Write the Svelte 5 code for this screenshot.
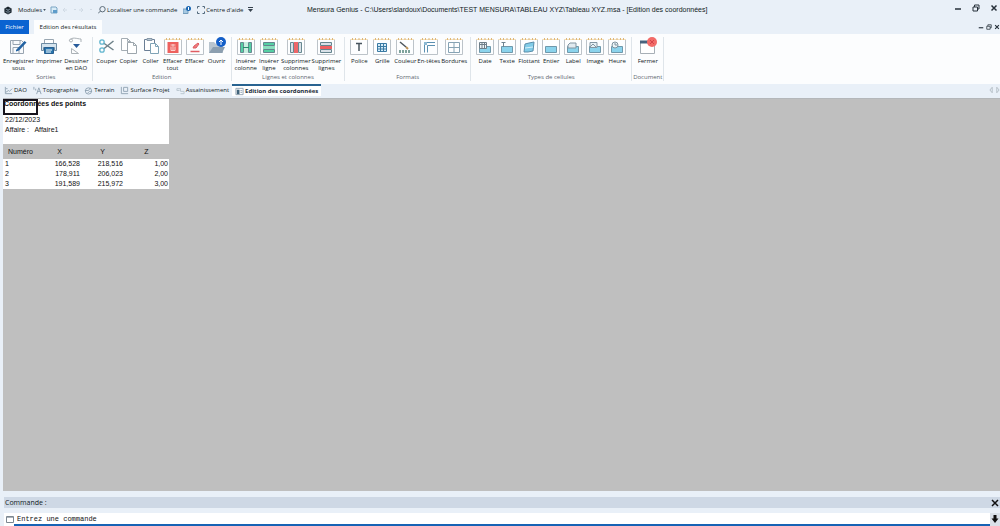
<script>
  const groups = [
    { title: 'Sorties', items: [['save', 'Enregistrer', 'sous'], ['print', 'Imprimer'], ['draw', 'Dessiner', 'en DAO']] },
    { title: 'Edition', items: [['cut', 'Couper'], ['copy', 'Copier'], ['paste', 'Coller'], ['trash', 'Effacer', 'tout'], ['erase', 'Effacer'], ['open', 'Ouvrir']] },
    { title: 'Lignes et colonnes', items: [['incol', 'Insérer', 'colonne'], ['inrow', 'Insérer', 'ligne'], ['delcol', 'Supprimer', 'colonnes'], ['delrow', 'Supprimer', 'lignes']] },
    { title: 'Formats', items: [['font', 'Police'], ['grid', 'Grille'], ['color', 'Couleur'], ['head', 'En-têtes'], ['border', 'Bordures']] },
    { title: 'Types de cellules', items: [['date', 'Date'], ['text', 'Texte'], ['float', 'Flottant'], ['int', 'Entier'], ['label', 'Label'], ['image', 'Image'], ['hour', 'Heure']] },
    { title: 'Document', items: [['close', 'Fermer']] },
  ];
  const framed = ['trash', 'erase', 'incol', 'inrow', 'delcol', 'delrow', 'font', 'grid', 'color', 'head', 'border', 'date', 'text', 'float', 'int', 'label', 'image', 'hour'];
  const cells = ['date', 'text', 'int', 'label', 'image', 'hour'];
  const tabs = [['dao', 'DAO'], ['topo', 'Topographie'], ['terrain', 'Terrain'], ['surface', 'Surface Projet'], ['pipe', 'Assainissement'], ['edit', 'Edition des coordonnées']];
  const rows = [['1', '166,528', '218,516', '1,00'], ['2', '178,911', '206,023', '2,00'], ['3', '191,589', '215,972', '3,00']];
  let command = $state('Entrez une commande');
</script>

{#snippet icon(n)}
  <svg class="icon" viewBox="0 0 18 18" fill="none" aria-hidden="true">
    {#if framed.includes(n)}
      <path d="M.5 2.500h17v15H.5z" fill="#fdfeff" stroke="#bcc3c9" />
      <path d="M0 2.500h18" stroke="#f3dfbc" />
      <path d="M2.500 1v2M5.500 1v2M9 1v2M12.500 1v2M15.500 1v2" stroke="#dfb878" />
    {/if}
    {#if cells.includes(n)}
      <path d="M3.500 9.500h11v6h-11z" fill="#8bd3ec" stroke="#6f98ab" />
    {/if}
    {#if n === 'save'}
      <path d="M1.500 3.500h11l2 2v11h-13z" fill="#f8fafc" stroke="#98a4b0" />
      <path d="M4 3.500h7v4H4zM4 10.500h6v6H4z" stroke="#98a4b0" />
      <path d="m7 13 8.500-9 2 1.500-7.500 8-3 1z" fill="#2262a2" />
    {:else if n === 'print'}
      <path d="M4.500 6V2.500h9V6" fill="#fff" stroke="#99a6b1" />
      <path d="M1.500 6.500h15v7h-2v-3h-11v3h-2z" fill="#d5e4ee" stroke="#6d8ba3" />
      <path d="M4.500 10.500h9v6h-9z" fill="#2876ae" stroke="#285f91" />
      <path d="M6 13h6M6 15h5" stroke="#fff" />
    {:else if n === 'draw'}
      <path d="M2 4c3-5 8-2 12-2v3M4.500 11.500v5h7z" stroke="#aab1b6" />
      <circle cx="4" cy="3.500" r="1.500" fill="#fff" stroke="#aab1b6" />
      <path d="M6 7h7l-3.500 4z" fill="#275b9b" />
    {:else if n === 'cut'}
      <path d="m5.500 6 10 7M5.500 12l10-8" stroke="#6d8088" stroke-width="1.500" />
      <circle cx="4" cy="5" r="2.200" stroke="#62b6cf" stroke-width="1.300" />
      <circle cx="4" cy="13" r="2.200" stroke="#62b6cf" stroke-width="1.300" />
    {:else if n === 'copy'}
      <path d="M1.500 1.500h6l3 3v9h-9zM7.500 1.500v3h3" fill="#fff" stroke="#a4adb4" />
      <path d="M7.500 5.500h6l3 3v8h-9zM13.500 5.500v3h3" fill="#fff" stroke="#9da6ad" />
    {:else if n === 'paste'}
      <path d="M2.500 2.500h10v11h-10z" fill="#fff" stroke="#6a7e95" />
      <path d="M5 1.500h5v2H5z" fill="#b9c8d4" stroke="#8698a8" />
      <path d="M8.500 6.500h5l3 3v7h-8zM13.500 6.500v3h3" fill="#fff" stroke="#7fa3b6" />
    {:else if n === 'trash'}
      <path d="M3.500 5h11v11h-11z" fill="#ed615e" />
      <path d="M6.500 8h5M7 9.500v4h4v-4M9 7v6" stroke="#fbd3d0" />
    {:else if n === 'erase'}
      <path d="m8 9 4-3 1 1-3 4H7z" fill="#ed7f80" stroke="#df5c62" />
      <path d="M4.500 14.500h9" stroke="#df5c62" stroke-width="1.500" />
    {:else if n === 'open'}
      <path d="M1 5h5l2 2h7v9H1z" fill="#b9c5cf" />
      <path d="m1 16 4-6h12l-3 6z" fill="#8c9fb0" />
      <circle cx="13" cy="5" r="5" fill="#145fc8" />
      <path d="M13 8V3m-2 2 2-2 2 2" stroke="#fff" />
    {:else if n === 'incol' || n === 'delcol'}
      <path d="M3.500 5.500h3v10h-3zM11.500 5.500h3v10h-3z" fill={n === 'incol' ? '#55cfa3' : '#d9e1e8'} stroke="#678890" />
      <path d="M7 5h4v11H7z" fill={n === 'incol' ? '#c9f0e1' : '#ee6668'} />
      {#if n === 'incol'}<path d="M6 10.500h6" stroke="#278b6a" />{/if}
    {:else if n === 'inrow' || n === 'delrow'}
      <path d="M3.500 5.500h11v3h-11zM3.500 12.500h11v3h-11z" fill={n === 'inrow' ? '#55cfa3' : '#d9e1e8'} stroke="#65848e" />
      <path d="M3 9h12v3H3z" fill={n === 'inrow' ? '#8adfbd' : '#ee6062'} />
    {:else if n === 'font'}
      <path d="M6 6.500h6M9 6v8" stroke="#47545e" stroke-width="1.500" />
    {:else if n === 'grid'}
      <path d="M4.500 6.500h9v8h-9zM7.500 6.500v8M10.500 6.500v8M4.500 9.500h9M4.500 12h9" fill="#d7edf9" stroke="#3a7ba4" />
    {:else if n === 'color'}
      <path d="m4 5 6 5" stroke="#4d565d" stroke-width="1.500" />
      <path d="M3 14.500h12" stroke="#7fa39c" stroke-width="3" stroke-dasharray="2 1" />
      <path d="m10 10 2 2" stroke="#bc9157" stroke-width="2" />
    {:else if n === 'head'}
      <path d="M4.500 15.500v-10H15M7.500 15.500v-7H15" stroke="#5b90b1" />
      <path d="M4 5h3v3H4z" fill="#8cb9d3" />
    {:else if n === 'border'}
      <path d="M3.500 5.500h11v10h-11zM9 5.500v10M3.500 10.500h11" stroke="#86a3b4" />
    {:else if n === 'date'}
      <path d="M3.500 5.500h7v6h-7zM3.500 7.500h7M6 5.500v6M8.500 5.500v6" fill="#eef3f6" stroke="#6f7e88" />
    {:else if n === 'text'}
      <path d="M3.500 5.500h4M5.500 5v5" stroke="#6e8490" />
    {:else if n === 'float'}
      <path d="m5 7 4-1 5-1-1 9-5 1H4z" fill="#81cce8" stroke="#5a8eaa" />
      <path d="m5 11 8-1" stroke="#d8f2fb" />
    {:else if n === 'label'}
      <path d="m4 8 2-2h6v5H4z" fill="#e1eaf0" stroke="#8195a1" />
    {:else if n === 'image'}
      <path d="M4 5.500h7v5H4zM4 10l3-3 3 3" fill="#e8f1f5" stroke="#8396a2" />
    {:else if n === 'hour'}
      <circle cx="7" cy="8" r="3" fill="#edf4f7" stroke="#7d929e" />
      <path d="M7 6v2h2" stroke="#7d929e" />
    {:else if n === 'close'}
      <path d="M1.500 4.500h14v12h-14z" fill="#fff" stroke="#a7afb6" />
      <path d="M1 5h10" stroke="#47627d" stroke-width="3" />
      <circle cx="13" cy="5" r="5" fill="#f26b68" />
      <path d="m11 3 4 4m0-4-4 4" stroke="#d4434a" />
    {/if}
  </svg>
{/snippet}

{#snippet tabIcon(n)}
  <svg class="small" viewBox="0 0 10 10" fill="none" stroke="#8fa1b1" aria-hidden="true">
    {#if n === 'dao'}<path d="M1.500 1v7.500H9M2 7l3-2 1 1 3-3M2 3h2" />
    {:else if n === 'topo'}<path d="M1 1v3M3 3v2M4 9l2.500-7L9 9M5 6h3" />
    {:else if n === 'terrain'}<circle cx="5" cy="5.500" r="3.500" /><path d="M1 5h4l2-3M4 8l2-2h3" />
    {:else if n === 'surface'}<path d="M1.500 1v7.500H9M4 1.500h4.500V6H4z" />
    {:else if n === 'pipe'}<path stroke="#b9c5ce" d="M1 3h4v3h4v2.500H5M1 3v2h3" />
    {:else}<path fill="#fff" d="M1 1.500h8v7H1z" /><path fill="#42647b" stroke="none" d="M2 3h3v5H2z" /><path d="M6 4h2M6 6h2" />{/if}
  </svg>
{/snippet}

{#snippet winIcons()}
  <button aria-label="Réduire"><svg viewBox="0 0 8 8"><path d="M1 5h6" stroke-width="1.500" /></svg></button>
  <button aria-label="Restaurer"><svg viewBox="0 0 8 8"><path d="M1 3h4.500v4H1zM2.500 3V1H7v4H5.500" /></svg></button>
  <button aria-label="Fermer"><svg viewBox="0 0 8 8"><path d="m1.500 1.500 5 5m0-5-5 5" stroke-width="1.500" /></svg></button>
{/snippet}

<div class="app">
  <header class="title">
    <div class="quick">
      <svg class="logo" viewBox="0 0 10 10" aria-hidden="true"><path d="m5 0 4.500 2.500v5L5 10 .5 7.500v-5z" fill="#18232c" /><path d="m2 3 3 1.500L8 3M5 4.500V9M2 6l2 1M8 6 6 7" stroke="#92a7b7" fill="none" /></svg>
      <button class="modules">Modules <svg class="caret" viewBox="0 0 4 3"><path d="M0 0h4L2 3z" fill="#44525f" /></svg></button>
      <button aria-label="Enregistrer"><svg class="tiny" viewBox="0 0 8 8"><path d="M1 1h5l1 1v5H1z" fill="#d9ecf7" stroke="#7aa5c4" /><path d="M3 4h4v3H3z" fill="#5e9cca" /></svg></button>
      <div class="history">
        <button aria-label="Annuler"><svg viewBox="0 0 16 6"><path d="m3 1-2 2 2 2M1 3h4M12 2l1 1 1-1" /></svg></button>
        <button aria-label="Rétablir"><svg viewBox="0 0 16 6"><path d="m3 1 2 2-2 2M1 3h4M12 2l1 1 1-1" /></svg></button>
      </div>
      <button><svg class="tiny" viewBox="0 0 8 8" fill="none" stroke="#5c6c79"><circle cx="4.500" cy="3.200" r="2.700" /><path d="M2.500 5 0 7.500" /></svg> Localiser une commande</button>
      <button class="note" aria-label="Notifications"><svg class="tiny" viewBox="0 0 8 8"><path d="M0 3h5v4.500H0z" fill="#a6c9e2" stroke="#739dbd" /><circle cx="5.500" cy="2.500" r="2.500" fill="#1865b1" /><path d="M5.500 1v3" stroke="#fff" /></svg></button>
      <button><svg class="tiny" viewBox="0 0 8 8" fill="none" stroke="#4f6679"><path d="M.5 2.500v-2h2M5.500.5h2v2M7.500 5.500v2h-2M2.500 7.500h-2v-2" /></svg> Centre d'aide</button>
      <button aria-label="Personnaliser"><svg class="custom" viewBox="0 0 5 6"><path d="M0 .5h5" stroke="#36424d" /><path d="M0 2h5L2.500 5z" fill="#36424d" /></svg></button>
    </div>
    <h1>Mensura Genius - C:\Users\slardoux\Documents\TEST MENSURA\TABLEAU XYZ\Tableau XYZ.msa - [Edition des coordonnées]</h1>
    <div class="window">{@render winIcons()}</div>
  </header>

  <nav class="menu">
    <button class="file">Fichier</button>
    <button class="current">Edition des résultats</button>
    <div class="window inner">{@render winIcons()}</div>
  </nav>

  <div class="ribbon">
    {#each groups as g}
      <section>
        <div class="tools">
          {#each g.items as item}
            <button>{@render icon(item[0])}<span>{item[1]}</span>{#if item[2]}<span>{item[2]}</span>{/if}</button>
          {/each}
        </div>
        <h2>{g.title}</h2>
      </section>
    {/each}
  </div>

  <nav class="docs">
    {#each tabs as t, i}
      <button class:active={i === 5}>{@render tabIcon(t[0])}{t[1]}</button>
    {/each}
    <svg class="scroll" viewBox="0 0 12 6" fill="none" stroke="#b3bcc4" aria-hidden="true"><path d="M3.500 0 1 3l2.500 3zM8.500 0 11 3 8.500 6z" /></svg>
  </nav>

  <main>
    <div class="sheet">
      <div class="cursor"></div>
      <h3>Coordonnées des points</h3>
      <p>22/12/2023</p>
      <p>Affaire :&nbsp;&nbsp; Affaire1</p>
      <table>
        <thead><tr><th>Numéro</th><th>X</th><th>Y</th><th>Z</th></tr></thead>
        <tbody>
          {#each rows as r}<tr>{#each r as c}<td>{c}</td>{/each}</tr>{/each}
        </tbody>
      </table>
    </div>
  </main>

  <footer>
    <div class="cmdhead"><label for="cmd">Commande :</label><button aria-label="Fermer la commande"><svg viewBox="0 0 8 8"><path d="m1 1 6 6m0-6-6 6" stroke="#111" stroke-width="1.500" /></svg></button></div>
    <div class="cmdline">
      <svg class="prompt" viewBox="0 0 8 7" fill="none" aria-hidden="true"><path d="M.5.5h7v6h-7z" stroke="#7c8791" /><path d="M1 1.500h6" stroke="#aab2b9" /></svg>
      <input id="cmd" bind:value={command} />
      <button aria-label="Historique"><svg viewBox="0 0 8 8"><path d="M2.500 0h3v3.500h2L4 8 .5 3.500h2z" fill="#111" /></svg></button>
    </div>
  </footer>
</div>

<style>
  :global(body) { margin: 0; }
  .app { min-height: 100vh; display: flex; flex-direction: column; background: #e9f0f8; color: #121b24; font: 6px/8px "Open Sans", "Noto Sans", sans-serif; }
  button { font: inherit; color: inherit; border: 0; background: none; padding: 0; white-space: nowrap; }
  h1, h2, h3, p { margin: 0; font: inherit; }
  svg { display: block; flex: none; }

  .title { display: flex; align-items: center; height: 20px; }
  .quick { display: flex; align-items: center; gap: 4px; padding-left: 4px; width: 307px; box-sizing: border-box; flex: none; }
  .quick button { display: flex; align-items: center; gap: 1px; }
  .logo { width: 8px; height: 9px; }
  .quick .modules { padding-left: 2px; }
  .quick .note { padding: 0 2px; }
  .caret { width: 3px; height: 2px; }
  .tiny { width: 8px; height: 8px; }
  .custom { width: 5px; height: 6px; }
  .history { display: flex; }
  .history svg { width: 16px; height: 6px; stroke: #d0dae4; fill: none; }
  h1 { flex: 1; font: 7px/10px "Liberation Sans", Arial, sans-serif; white-space: nowrap; }
  .window { display: flex; gap: 10px; padding: 0 2px 5px 0; }
  .window svg { width: 8px; height: 8px; fill: none; stroke: #26303a; }

  .menu { display: flex; align-items: stretch; height: 14px; }
  .file { width: 29px; background: #0b63d1; color: #fff; }
  .current { margin-left: 5px; width: 68px; background: #fcfdfe; }
  .window.inner { margin-left: auto; gap: 2px; padding: 0; align-items: center; }
  .window.inner svg { width: 6px; height: 6px; }

  .ribbon { display: flex; background: #fcfdfe; height: 50px; box-sizing: border-box; padding: 3px 0; }
  section { display: flex; flex-direction: column; justify-content: space-between; border-right: 1px solid #dfe5ea; padding: 0 3px; }
  section:last-child { padding: 0 1px; }
  .tools { display: flex; align-items: flex-start; justify-content: center; }
  section:nth-child(1) .tools { gap: 2px; }
  section:nth-child(3) .tools, section:nth-child(4) .tools { gap: 1px; }
  .tools button { display: flex; flex-direction: column; align-items: center; min-width: 22px; line-height: 7px; }
  .icon { width: 18px; height: 18px; margin-bottom: 3px; }
  h2 { text-align: center; color: #5d6770; }

  .docs { display: flex; height: 14px; align-items: stretch; padding-left: 1px; }
  .docs button { display: flex; align-items: center; gap: 1px; padding: 0 3px 2px; box-sizing: border-box; }
  .docs .active { background: #fff; border-top: 2px solid #286391; font-weight: 700; height: 12px; padding-bottom: 0; color: #1b2c39; }
  .small { width: 9px; height: 9px; }
  .scroll { width: 11px; height: 6px; margin: 3px 0 0 auto; }

  main { flex: 1; margin-left: 3px; background: #bfbfbf; border-top: 1px solid #b4b7ba; box-sizing: border-box; }
  .sheet { width: 166px; background: #fff; position: relative; font: 7px/10px "Liberation Sans", Arial, sans-serif; color: #111; }
  .cursor { position: absolute; left: 0; top: 0; width: 35px; height: 16px; border: 2px solid #16131d; box-sizing: border-box; }
  h3 { font-weight: 700; padding: 0 1px; height: 16px; box-sizing: border-box; }
  p { padding-left: 2px; }
  table { width: 100%; border-collapse: collapse; margin-top: 9px; table-layout: fixed; }
  th { background: #bfbfbf; font-weight: 400; height: 15px; padding: 0; }
  th:first-child { text-align: left; padding-left: 5px; width: 30px; }
  th:nth-child(2) { width: 43px; }
  th:nth-child(3) { width: 43px; }
  th:last-child { text-align: center; }
  td { padding: 0 1px; text-align: right; height: 10px; }
  td:first-child { text-align: left; padding-left: 2px; }

  footer { padding-top: 6px; }
  .cmdhead { display: flex; justify-content: space-between; align-items: center; height: 11px; margin-left: 4px; padding: 0 1px; background: #ced8e5; font-size: 7px; }
  .cmdhead svg { width: 8px; height: 8px; }
  .cmdline { display: flex; align-items: center; margin: 5px 0 0 4px; height: 13px; background: #fff; }
  .prompt { width: 8px; height: 7px; margin-left: 2px; }
  input { flex: 1; align-self: stretch; min-width: 0; border: 0; border-bottom: 2px solid #1763b5; outline: 0; padding: 0 3px; background: none; color: #111; font: 7px/10px "Liberation Mono", "Courier New", monospace; }
  .cmdline button { background: #dae1e9; padding: 2px 1px 3px; }
  .cmdline button svg { width: 8px; height: 8px; }
</style>
